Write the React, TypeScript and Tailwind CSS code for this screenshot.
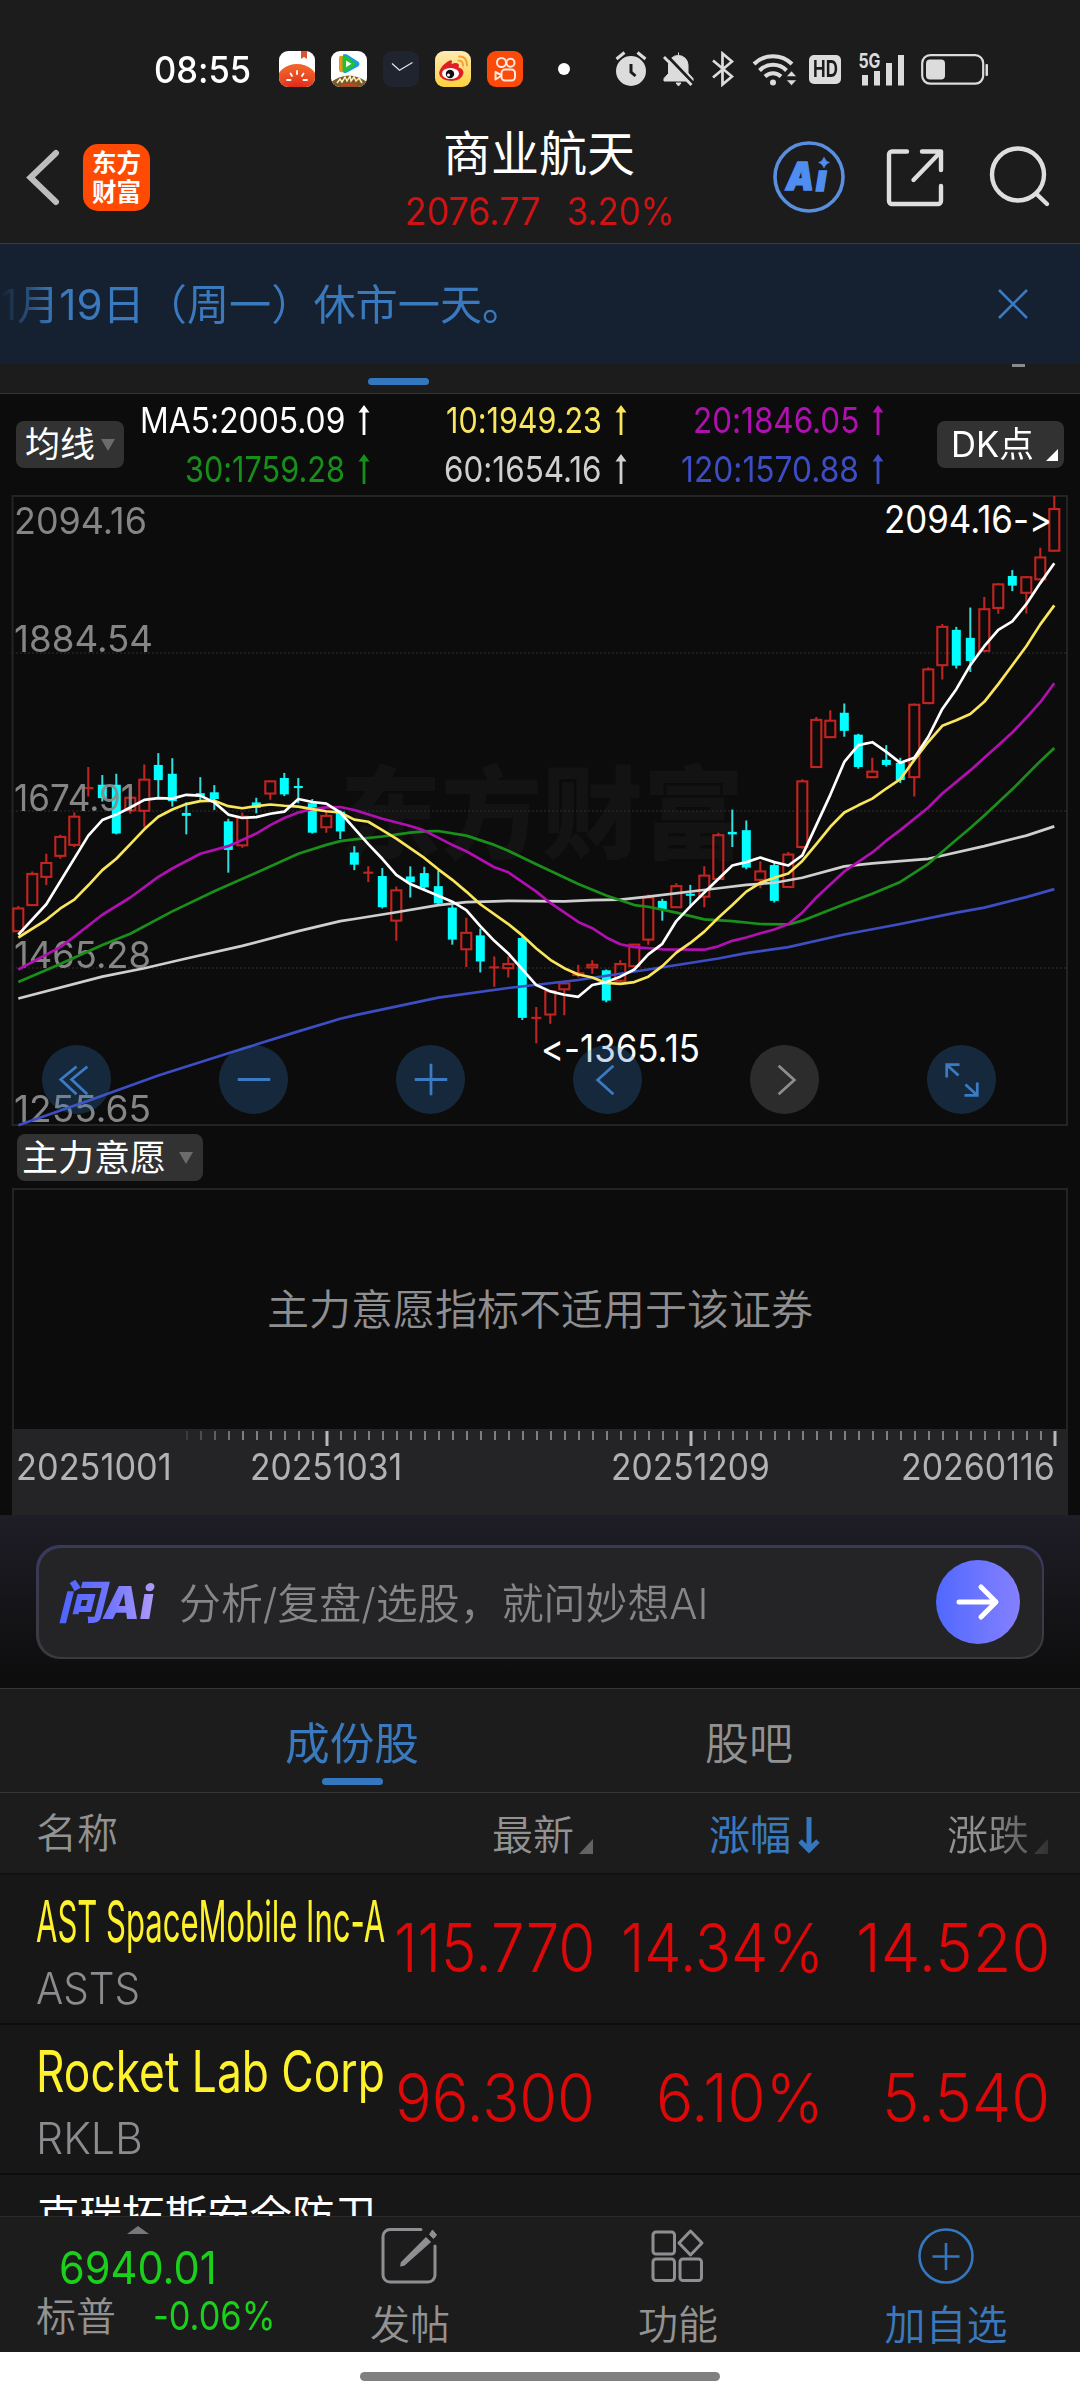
import React, { useLayoutEffect, useRef, useState } from "react";
import clsx from "clsx";

type Point = [number, number];
// [direction, body top, body bottom, high, low]
type Candle = ["u" | "d", number, number, number, number];

const candles: Candle[] = [
  ["u", 1018, 1072, 1012, 1074],
  ["u", 936, 1010, 930, 1012],
  ["u", 910, 943, 888, 962],
  ["u", 848, 893, 843, 900],
  ["u", 800, 867, 790, 872],
  ["u", 732, 732, 682, 752],
  ["d", 724, 756, 701, 764],
  ["d", 724, 840, 698, 842],
  ["u", 755, 785, 752, 793],
  ["u", 712, 786, 676, 825],
  ["d", 677, 713, 649, 755],
  ["d", 698, 763, 661, 776],
  ["d", 791, 798, 766, 842],
  ["d", 744, 752, 706, 760],
  ["d", 742, 758, 725, 784],
  ["d", 811, 879, 805, 933],
  ["u", 800, 868, 790, 874],
  ["d", 766, 779, 755, 792],
  ["u", 716, 745, 714, 760],
  ["d", 708, 747, 696, 751],
  ["d", 727, 732, 708, 768],
  ["d", 768, 838, 758, 840],
  ["u", 798, 825, 788, 838],
  ["d", 788, 835, 785, 853],
  ["d", 885, 914, 870, 927],
  ["u", 933, 933, 918, 955],
  ["d", 941, 1015, 922, 1018],
  ["u", 975, 1047, 966, 1095],
  ["d", 942, 956, 918, 992],
  ["d", 934, 968, 919, 972],
  ["d", 965, 1006, 928, 1010],
  ["d", 1016, 1092, 1010, 1104],
  ["u", 1076, 1115, 1040, 1157],
  ["d", 1082, 1144, 1066, 1170],
  ["u", 1158, 1158, 1132, 1204],
  ["u", 1150, 1160, 1132, 1182],
  ["d", 1088, 1278, 1082, 1283],
  ["u", 1278, 1278, 1252, 1338],
  ["u", 1215, 1270, 1212, 1292],
  ["u", 1196, 1210, 1190, 1272],
  ["u", 1172, 1176, 1152, 1182],
  ["u", 1152, 1158, 1141, 1173],
  ["d", 1165, 1237, 1163, 1241],
  ["u", 1150, 1190, 1141, 1194],
  ["u", 1104, 1155, 1102, 1158],
  ["u", 992, 1092, 985, 1104],
  ["d", 1000, 1020, 995, 1047],
  ["u", 965, 1015, 958, 1017],
  ["d", 983, 988, 962, 1012],
  ["u", 940, 990, 918, 1015],
  ["u", 844, 948, 838, 950],
  ["d", 836, 842, 783, 872],
  ["d", 832, 921, 809, 925],
  ["u", 930, 950, 906, 970],
  ["d", 915, 1000, 908, 1004],
  ["u", 890, 967, 884, 969],
  ["u", 716, 872, 711, 876],
  ["u", 570, 682, 563, 684],
  ["u", 572, 611, 547, 613],
  ["d", 553, 596, 531, 610],
  ["d", 605, 682, 603, 686],
  ["u", 693, 706, 660, 708],
  ["d", 665, 677, 630, 681],
  ["d", 672, 713, 660, 720],
  ["u", 534, 706, 531, 752],
  ["u", 450, 530, 445, 533],
  ["u", 349, 440, 342, 474],
  ["d", 356, 441, 349, 448],
  ["d", 375, 430, 303, 456],
  ["u", 307, 406, 278, 409],
  ["u", 248, 304, 245, 318],
  ["d", 228, 251, 214, 264],
  ["u", 231, 268, 228, 317],
  ["u", 184, 236, 161, 238],
  ["u", 69, 168, 38, 170],
];

const averages: { color: string; points: Point[] }[] = [
  {
    color: "#3d4dc4",
    points: [[0, 1533], [5, 1475], [10, 1415], [15, 1362], [20, 1310], [23, 1280], [24, 1272], [30, 1230], [35, 1207], [40, 1188], [45, 1163], [50, 1137], [52, 1124], [55, 1110], [59, 1080], [63, 1055], [67, 1028], [69, 1016], [72, 991], [74, 972]],
  },
  {
    color: "#cfcfcf",
    points: [[0, 1232], [6, 1180], [9, 1160], [12, 1137], [16, 1107], [20, 1072], [23, 1048], [24, 1043], [27, 1027], [30, 1010], [32, 1003], [34, 1001], [35, 1000], [39, 1001], [41, 998], [43, 997], [45, 990], [50, 970], [52, 962], [54, 957], [56, 945], [59, 918], [61, 911], [65, 900], [69, 870], [72, 845], [74, 823]],
  },
  {
    color: "#1a8f1a",
    points: [[0, 1193], [3, 1150], [6, 1105], [8, 1078], [11, 1025], [14, 977], [17, 933], [20, 888], [22, 867], [23, 858], [24, 854], [26, 847], [28, 838], [29, 835], [30, 834], [32, 845], [34, 867], [35, 881], [37, 913], [40, 960], [42, 987], [44, 1010], [45, 1014], [47, 1028], [49, 1044], [51, 1048], [53, 1055], [55, 1056], [56, 1047], [59, 1008], [61, 983], [63, 955], [65, 912], [67, 855], [68, 827], [69, 797], [71, 735], [73, 668], [74, 637]],
  },
  {
    color: "#b010b0",
    points: [[0, 1163], [3, 1110], [4, 1085], [6, 1033], [8, 992], [10, 943], [11, 923], [13, 888], [15, 870], [17, 840], [18, 820], [19, 803], [20, 790], [21, 782], [22, 778], [23, 777], [24, 784], [26, 805], [28, 822], [29, 833], [31, 867], [32, 882], [34, 920], [35, 932], [37, 978], [38, 1005], [40, 1050], [41, 1065], [42, 1087], [43, 1103], [44, 1110], [46, 1115], [49, 1116], [50, 1108], [51, 1095], [52, 1087], [53, 1077], [54, 1068], [55, 1055], [56, 1028], [57, 992], [59, 930], [61, 885], [62, 857], [63, 832], [65, 778], [66, 745], [68, 690], [70, 630], [71, 600], [72, 565], [73, 528], [74, 483]],
  },
  {
    color: "#f9e65c",
    points: [[0, 1087], [2, 1045], [3, 1018], [4, 997], [5, 963], [6, 927], [7, 900], [8, 865], [9, 830], [10, 800], [11, 783], [12, 770], [13, 763], [14, 762], [15, 775], [16, 780], [17, 775], [18, 771], [19, 774], [20, 776], [21, 782], [22, 787], [23, 790], [24, 807], [25, 812], [26, 832], [27, 852], [29, 898], [30, 925], [31, 950], [32, 978], [33, 1008], [35, 1055], [36, 1082], [37, 1113], [38, 1140], [39, 1160], [40, 1175], [41, 1182], [42, 1195], [43, 1197], [44, 1193], [45, 1180], [46, 1155], [47, 1123], [48, 1100], [49, 1073], [50, 1040], [51, 1010], [52, 978], [53, 957], [54, 945], [55, 935], [56, 905], [57, 865], [58, 824], [59, 790], [60, 773], [61, 757], [62, 733], [63, 711], [64, 665], [65, 622], [66, 584], [67, 571], [68, 556], [69, 527], [70, 485], [71, 440], [72, 395], [73, 343], [74, 298]],
  },
  {
    color: "#ffffff",
    points: [[0, 1080], [2, 1008], [5, 845], [6, 808], [7, 795], [8, 778], [9, 760], [10, 756], [11, 757], [12, 748], [13, 750], [14, 766], [15, 795], [16, 803], [17, 801], [18, 793], [19, 788], [20, 758], [21, 765], [22, 769], [23, 790], [24, 828], [25, 865], [26, 900], [27, 938], [28, 960], [30, 988], [31, 1002], [32, 1022], [33, 1060], [34, 1095], [35, 1125], [36, 1163], [37, 1200], [38, 1215], [39, 1223], [40, 1228], [41, 1200], [42, 1193], [43, 1180], [44, 1163], [45, 1127], [46, 1102], [47, 1048], [48, 1013], [49, 980], [50, 948], [51, 916], [52, 908], [53, 897], [54, 908], [55, 916], [56, 892], [57, 820], [58, 748], [59, 670], [60, 630], [61, 623], [62, 646], [63, 672], [64, 660], [65, 610], [66, 544], [67, 497], [68, 440], [69, 395], [70, 356], [71, 336], [72, 295], [73, 245], [74, 198]],
  },
];

const axisLabels = [
  { text: "2094.16", y: 533.5, w: 130 },
  { text: "1884.54", y: 652, w: 136 },
  { text: "1674.91", y: 811, w: 118 },
  { text: "1465.28", y: 968, w: 134 },
  { text: "1255.65", y: 1121.5, w: 134 },
];

const maColumns = [
  [
    { text: "MA5:2005.09", w: 205, color: "text-white" },
    { text: "30:1759.28", w: 160, color: "text-[#17901a]" },
  ],
  [
    { text: "10:1949.23", w: 156, color: "text-[#f9e65c]" },
    { text: "60:1654.16", w: 158, color: "text-[#cfcfcf]" },
  ],
  [
    { text: "20:1846.05", w: 166, color: "text-[#b010b0]" },
    { text: "120:1570.88", w: 178, color: "text-[#3d4dc4]" },
  ],
];

const stocks = [
  { name: "AST SpaceMobile Inc-A", code: "ASTS", codeW: 104, price: ["115.770", 201], pct: ["14.34%", 203], diff: ["14.520", 194] },
  { name: "Rocket Lab Corp", code: "RKLB", codeW: 107, price: ["96.300", 200], pct: ["6.10%", 168], diff: ["5.540", 168] },
] as const;

const xAt = (i: number) => 18 + i * 14;
const yAt = (v: number) => 480 + v / 2.376;

// squeezes a single line of text into a fixed width
const Fit = ({ w, className, children }: { w: number; className?: string; children: React.ReactNode }) => {
  const ref = useRef<HTMLSpanElement>(null);
  const [scale, setScale] = useState(1);

  useLayoutEffect(() => {
    if (ref.current) setScale(w / ref.current.offsetWidth);
  }, [w, children]);

  return (
    <span className={clsx("flex shrink-0 whitespace-nowrap", className)} style={{ width: w }}>
      <span ref={ref} className="inline-block shrink-0 origin-left" style={{ transform: `scaleX(${scale})` }}>
        {children}
      </span>
    </span>
  );
};

const AppIcons = () => (
  <div className="flex gap-4">
    <svg className="size-9 rounded-[9px]" viewBox="0 0 36 36">
      <defs>
        <radialGradient id="tomato" cx="0.5" cy="1" r="0.9">
          <stop offset="0" stopColor="#d81212" />
          <stop offset="1" stopColor="#f0622a" />
        </radialGradient>
      </defs>
      <rect width="36" height="36" fill="#fff" />
      <path d="M22 0h6v8l-3-2-3 2z" fill="#d8552f" />
      <ellipse cx="18" cy="29" rx="20" ry="16" fill="url(#tomato)" />
      <path d="M18 20v3M11.500 22.500l1.500 2.500M24.500 22.500l-1.500 2.500M8 29h3.500M28 29h-3.500" stroke="#fff" strokeWidth="1.800" strokeLinecap="round" />
    </svg>
    <svg className="size-9 rounded-[9px]" viewBox="0 0 36 36">
      <rect width="36" height="36" fill="#fff" />
      <path d="M8 7q0-3 4-2v16q-4 1-4-3z" fill="#f5901e" />
      <path d="M12 3.500q2-.8 4 0l11 7q3 2.500 0 5l-11 6q-4 1.500-4-1z" fill="#1a9be0" />
      <path d="M11.500 5.500q2-.8 4 0l7 5q3 2.500 0 5l-7 4.500q-4 1.500-4-1z" fill="#1fc32c" />
      <path d="M15 9.500l5.500 3.300-5.500 3.400z" fill="#fff" />
      <path d="M0 31q18-13 36 0v5H0z" fill="#7c5a28" />
      <path d="M6 32l3-4 2 3 3-5 2 4 3-5 1 5 3-4 2 4 3-3 3 5" stroke="#fbeec0" strokeWidth="1.500" fill="none" />
      <path d="M10 35q8-3 16 0" stroke="#d23c1c" strokeWidth="2" fill="none" />
    </svg>
    <svg className="size-9 rounded-[9px]" viewBox="0 0 36 36">
      <rect width="36" height="36" fill="#20242f" />
      <path d="M9 12.500l7.500 6.800L29.500 11.500" stroke="#e4e4ea" strokeWidth="1.200" fill="none" />
    </svg>
    <svg className="size-9 rounded-[9px]" viewBox="0 0 36 36">
      <defs>
        <linearGradient id="weibo" x1="0" y1="0" x2="0" y2="1">
          <stop offset="0" stopColor="#fdebb6" />
          <stop offset="1" stopColor="#ffd23c" />
        </linearGradient>
      </defs>
      <rect width="36" height="36" fill="url(#weibo)" />
      <path d="M4 22q1-6 8-11 4-3 5-1l-.5 3q5-2 7 0 1 1.500 0 3.500 5 1 5 5.500-1 7-12 8Q4.500 29 4 22z" fill="#e01e26" />
      <ellipse cx="15.500" cy="22.500" rx="8.500" ry="5.500" fill="#fff" />
      <circle cx="15" cy="23" r="4.200" fill="#111" />
      <circle cx="13.500" cy="24" r="1.500" fill="#fff" />
      <path d="M24 5.500q8-.5 8 9M23.500 9.500q4.500 0 4.500 5" stroke="#f5a32c" strokeWidth="2" fill="none" strokeLinecap="round" />
    </svg>
    <svg className="size-9 rounded-[9px]" viewBox="0 0 36 36" fill="none" stroke="#ffe9dc" strokeWidth="2">
      <rect width="36" height="36" fill="#fc4a0b" stroke="none" />
      <circle cx="14.500" cy="11.500" r="4.500" />
      <circle cx="23.500" cy="11.800" r="4" />
      <rect x="14.500" y="18.500" width="13.500" height="11" rx="3.500" />
      <path d="M14 24l-5.500-3v7.500L14 25z" strokeLinejoin="round" />
    </svg>
  </div>
);

const StatusIcons = () => (
  <div className="flex items-center text-[#dcdcdc]">
    <svg className="ml-[45px] h-9 w-[32px]" viewBox="0 0 32 36">
      <circle cx="16" cy="20" r="15" fill="currentColor" />
      <path d="M1.500 8l8-6.500M30.500 8l-8-6.500" stroke="currentColor" strokeWidth="3" />
      <path d="M16 13v8l4.500 4" stroke="#1c1c1c" strokeWidth="3" fill="none" />
    </svg>
    <svg className="ml-[16px] h-9 w-[31px]" viewBox="0 0 31 36">
      <path d="M15.500 1.500v3a9.500 9.500 0 0 1 9.500 9.500v8l5 5.500v2.500H1v-2.500l4.500-5V14a9.500 9.500 0 0 1 10-9.500M13 32h5l-2.500 3z" fill="currentColor" stroke="currentColor" />
      <path d="M3 3.500l28 29.500" stroke="#1c1c1c" strokeWidth="3" />
      <path d="M1 6l27.500 28" stroke="currentColor" strokeWidth="2.800" />
    </svg>
    <svg className="ml-[18px] h-9 w-[22px]" viewBox="0 0 22 36" fill="none" stroke="currentColor" strokeWidth="2.700">
      <path d="M1 9.500l19 16-9.500 8V2.500l9.500 8-19 16" />
    </svg>
    <svg className="ml-[18px] h-9 w-[46px]" viewBox="0 0 46 36" fill="none" stroke="currentColor" strokeWidth="4">
      <path d="M2 13a27 27 0 0 1 38 0M7.500 19.500a19 19 0 0 1 27 0M13 25.500a11.500 11.500 0 0 1 16 0" />
      <circle cx="21" cy="31.500" r="3" fill="currentColor" stroke="none" />
      <path d="M34.500 25.500l5-5.500 5 5.500zM34.500 29l5 5.500 5-5.500z" fill="currentColor" stroke="#1c1c1c" strokeWidth="0.500" />
    </svg>
    <span className="ml-[11px] flex h-[29px] w-[32px] items-center justify-center rounded-[5px] bg-[#dcdcdc] text-[23px] leading-none font-bold text-[#1c1c1c]">
      <Fit w={25}>HD</Fit>
    </span>
    <svg className="ml-[17px] h-9 w-[48px] overflow-visible" viewBox="0 0 48 36" fill="currentColor">
      <path d="M4 24h6v10.500H4zM16 20h6v14.500h-6zM28 12h6v22.500h-6zM40 4h6v30.500h-6z" />
      <rect width="24" height="18" fill="#1c1c1c" />
      <text x="0.500" y="16.500" fontSize="20" fontWeight="700" textLength="22" lengthAdjust="spacingAndGlyphs">5G</text>
    </svg>
    <svg className="ml-[15px] h-[31px] w-[68px]" viewBox="0 0 68 31" fill="none">
      <rect x="1.200" y="1.200" width="61" height="28.500" rx="8" stroke="currentColor" strokeWidth="2.200" />
      <rect x="5" y="5.500" width="19" height="20" rx="4" fill="currentColor" />
      <rect x="64.500" y="10" width="2.500" height="12" rx="1" fill="currentColor" />
    </svg>
  </div>
);

const Header = () => (
  <header className="bg-[#1c1c1c]">
    <div className="flex h-[122px] items-center pt-[16px]">
      <Fit w={97} className="ml-[154px] text-[37px] leading-none font-medium text-white">08:55</Fit>
      <div className="ml-[28px]">
        <AppIcons />
      </div>
      <span className="ml-[35px] size-3 rounded-full bg-white" />
      <StatusIcons />
    </div>
    <div className="flex h-[122px] border-b border-[#3a3a3a]">
      <svg className="mt-[26px] ml-[26px] h-[58px] w-[36px] shrink-0" viewBox="0 0 36 58" fill="none" stroke="#bdbdbd" strokeWidth="6" strokeLinecap="round">
        <path d="M30 5L4.500 29.500 30 54" />
      </svg>
      <div className="mt-[22px] ml-[21px] flex size-[67px] shrink-0 flex-col items-center justify-center rounded-[15px] bg-[#ff4a04] text-[24.500px] leading-[29px] font-bold text-white">
        <span>东方</span>
        <span>财富</span>
      </div>
      <div className="ml-[253px] flex w-[272px] shrink-0 flex-col items-center">
        <h1 className="mt-[5px] text-[48px] leading-[54px] text-white">商业航天</h1>
        <div className="mt-[13px] ml-[2px] flex gap-[26px] text-[38px] leading-[34px] text-[#cd1313]">
          <Fit w={136}>2076.77</Fit>
          <Fit w={108}>3.20%</Fit>
        </div>
      </div>
      <svg className="mt-[18px] ml-[97px] size-[74px] shrink-0" viewBox="0 0 74 74">
        <circle cx="37" cy="37" r="34" stroke="#5a8ede" strokeWidth="3.600" fill="none" />
        <g fill="#4f8df0" stroke="#4f8df0">
          <text x="14" y="49.500" fontSize="39" fontWeight="900" fontStyle="italic" strokeWidth="1.500" textLength="28" lengthAdjust="spacingAndGlyphs">A</text>
          <text x="44" y="51" fontSize="36" fontWeight="900" fontStyle="italic" strokeWidth="1.500">ı</text>
          <path d="M52 17q1.500 4.500 5.500 5.500-4 1-5.500 5.500-1.500-4.500-5.500-5.500 4-1 5.500-5.500z" strokeWidth="0.500" />
        </g>
      </svg>
      <svg className="mt-[25px] ml-[39px] size-[62px] shrink-0" viewBox="0 0 62 62" fill="none" stroke="#dedede" strokeWidth="4.400" strokeLinecap="round" strokeLinejoin="round">
        <path d="M22 4.500H7a3 3 0 0 0-3 3V54a3 3 0 0 0 3 3h46a3 3 0 0 0 3-3V39M37 4.500h19V23M56 4.500L28.500 33" />
      </svg>
      <svg className="mt-[24px] ml-[40px] size-[64px] shrink-0" viewBox="0 0 64 64" fill="none" stroke="#dedede" strokeWidth="4.400" strokeLinecap="round">
        <circle cx="31" cy="28.500" r="26" />
        <path d="M49 47.500l11 10.500" />
      </svg>
    </div>
  </header>
);

const Arrow = () => (
  <svg className="ml-[12px] h-[30px] w-[14px]" viewBox="0 0 14 30" fill="currentColor">
    <path d="M7 0l5.500 7.500H8.400V30H5.600V7.500H1.500z" />
  </svg>
);

const MaBar = () => (
  <div className="flex h-[101px] shrink-0 bg-[#0c0c0c]">
    <button className="mt-[27px] ml-4 flex h-[47px] w-[108px] shrink-0 items-center rounded-lg bg-[#323232] pl-[9px] text-[35px] leading-none text-white">
      均线
      <svg className="ml-[6px] h-[12px] w-[14px]" viewBox="0 0 14 12" fill="#6c6c6c">
        <path d="M0 0h14L7 12z" />
      </svg>
    </button>
    <div className="ml-[16px] grid w-[745px] shrink-0 grid-cols-[231px_257px_257px] text-[36px]">
      {maColumns.map((column) => (
        <div key={column[0].text} className="flex flex-col pt-[1px]">
          {column.map((item) => (
            <div key={item.text} className={clsx("flex h-[49px] items-center justify-end leading-none", item.color)}>
              <Fit w={item.w}>{item.text}</Fit>
              <Arrow />
            </div>
          ))}
        </div>
      ))}
    </div>
    <button className="mt-[27px] ml-[52px] flex h-[47px] w-[127px] shrink-0 items-center rounded-lg bg-[#323232] pl-[14px] text-[35px] leading-none text-white">
      <Fit w={83}>DK点</Fit>
      <svg className="mt-[21px] ml-[12px] size-[12px]" viewBox="0 0 12 12" fill="#fff">
        <path d="M12 0v12H0z" />
      </svg>
    </button>
  </div>
);

const KLineChart = () => (
  <svg className="block h-[635px] w-full" viewBox="0 495 1080 635">
    <text x="340" y="851" fontSize="101" fontWeight="900" fill="#131313">东方财富</text>
    <rect x="12.500" y="496" width="1054.500" height="629" fill="none" stroke="#242424" strokeWidth="2" />
    {[653, 811, 968].map((y) => (
      <line key={y} x1="12" x2="1067" y1={y} y2={y} stroke="#2e2e2e" strokeWidth="1" strokeDasharray="2 2" />
    ))}
    {candles.map(([dir, top, bottom, high, low], i) => {
      const x = xAt(i) + 0.3;
      const t = yAt(top);
      const h = yAt(bottom) - t;
      if (dir === "d") {
        return (
          <g key={i}>
            <line x1={x} x2={x} y1={yAt(high)} y2={yAt(low)} stroke="#35dede" strokeWidth="2" />
            <rect x={x - 4.5} y={t} width="9" height={Math.max(h, 2)} fill="#00ffff" />
          </g>
        );
      }
      return (
        <g key={i} stroke="#c22420" strokeWidth="2.100" fill="none">
          <path d={`M${x} ${yAt(high)}V${t}M${x} ${t + h}V${yAt(low)}`} />
          {h > 0 ? <rect x={x - 5} y={t} width="10" height={h} /> : <path d={`M${x - 5} ${t}h10`} />}
        </g>
      );
    })}
    <g fontSize="37" fill="#8c8c8c" opacity="0.950">
      {axisLabels.map((label) => (
        <text key={label.text} x="14" y={label.y} textLength={label.w + 3} lengthAdjust="spacingAndGlyphs">{label.text}</text>
      ))}
    </g>
    {averages.map((line) => (
      <polyline key={line.color} points={line.points.map(([i, v]) => `${xAt(i) + 0.3},${yAt(v)}`).join(" ")} fill="none" stroke={line.color} strokeWidth="2.700" strokeLinejoin="round" />
    ))}
    <g fontSize="38" fill="#fff">
      <text x="884" y="532.500" textLength="168" lengthAdjust="spacingAndGlyphs">{"2094.16->"}</text>
      <text x="541" y="1062" textLength="159" lengthAdjust="spacingAndGlyphs">{"<-1365.15"}</text>
    </g>
  </svg>
);

const chartButtons = [
  "M35 24L19 37l16 15M46 24L30 37l16 15",
  "M19 35h33",
  "M19 35h33M35.500 19v32",
  "M41 21L25 35.500 41 50",
  "M29 21l16 14.500L29 50",
  "M20 33V20h13M20 20l12 11M51 38v13H38M51 51L39 40",
];

const ChartControls = () => (
  <div className="absolute top-[550px] left-[42px] flex gap-[108px]">
    {chartButtons.map((d, i) => (
      <button key={d} className={clsx("size-[69px] rounded-full", i === 4 ? "bg-white/13 text-[#8e8e8e]" : "bg-[#3577bf]/27 text-[#3a7bc4]")}>
        <svg className="size-[69px]" viewBox="0 0 70 70" fill="none" stroke="currentColor" strokeWidth="2.800">
          <path d={d} transform={i === 0 ? "translate(0 -2)" : undefined} />
        </svg>
      </button>
    ))}
  </div>
);

const minorTicks = Array.from({ length: 63 }, (_, i) => 187 + i * 14);

const Indicator = () => (
  <div className="bg-[#0c0c0c] px-[12px]">
    <div className="h-[58px] pt-[4px]">
      <button className="ml-[5px] flex h-[47px] w-[186px] items-center rounded-lg bg-[#323232] pl-[5px] text-[36px] leading-none text-white">
        主力意愿
        <svg className="ml-[13px] h-[12px] w-[14px]" viewBox="0 0 14 12" fill="#6c6c6c">
          <path d="M0 0h14L7 12z" />
        </svg>
      </button>
    </div>
    <div className="flex h-[241px] w-[1056px] items-center justify-center border-2 border-b-0 border-[#242424] text-[42px] font-[350] text-[#8f8f92]">
      <Fit w={546}>主力意愿指标不适用于该证券</Fit>
    </div>
    <div className="h-[86px] w-[1056px] bg-[#242427]">
      <svg className="block h-[17px] w-full" viewBox="12 1429 1056 17">
        {minorTicks.map((x, i) => (
          <line key={x} x1={x} x2={x} y1="1431" y2="1440" stroke="#8a8a8a" strokeWidth="1.800" opacity={i < 4 ? 0.25 + i * 0.2 : 1} />
        ))}
        {[327, 691, 1055].map((x) => (
          <line key={x} x1={x} x2={x} y1="1431" y2="1446" stroke="#b8b8b8" strokeWidth="3" />
        ))}
      </svg>
      <div className="flex h-[40px] items-center text-[37px] leading-none text-[#b2b2b2]">
        <Fit w={156} className="ml-[4px]">20251001</Fit>
        <Fit w={152} className="ml-[78px]">20251031</Fit>
        <Fit w={159} className="ml-[209px]">20251209</Fit>
        <Fit w={154} className="ml-[131px]">20260116</Fit>
      </div>
    </div>
  </div>
);

const AskAi = () => (
  <div className="flex h-[173px] bg-linear-to-b from-[#1f1e27] to-[#0c0c0c] px-9 pt-[30px]">
    <div className="h-[114px] w-[1008px] rounded-[24px] bg-linear-to-b from-[#39395f] to-[#3d3a3a] p-[2.5px]">
      <div className="flex h-full items-center rounded-[22px] bg-[#242427]">
        <Fit w={100} className="ml-[19px] text-[46px] leading-[56px] font-black italic">
          <span className="bg-linear-to-r from-[#4d63ff] via-[#6f74ff] to-[#b49cf8] bg-clip-text pr-[4px] text-transparent">问Ai</span>
        </Fit>
        <Fit w={530} className="mt-[2px] ml-[21px] text-[42px] font-[350] text-[#868686]">分析/复盘/选股，就问妙想AI</Fit>
        <button className="ml-[227px] flex size-[84px] shrink-0 items-center justify-center rounded-full bg-linear-to-r from-[#5068ff] to-[#8580ff]">
          <svg className="size-[44px]" viewBox="0 0 44 44" fill="none" stroke="#fff" strokeWidth="5" strokeLinecap="round" strokeLinejoin="round">
            <path d="M3 22h36M25 7l15 15-15 15" />
          </svg>
        </button>
      </div>
    </div>
  </div>
);

const Corner = ({ className }: { className: string }) => (
  <svg className={clsx("h-[15px] w-[14px]", className)} viewBox="0 0 14 15" fill="currentColor">
    <path d="M14 0v15H0z" />
  </svg>
);

const Constituents = () => (
  <section className="flex h-[528px] flex-col overflow-hidden bg-[#171717]">
    <div className="flex h-[105px] shrink-0 items-start border-y border-[#363636] bg-[#1c1c1c] text-[44px] leading-[48px] font-[350]">
      <div className="mt-[31px] ml-[285px] flex w-[134px] flex-col items-center text-[#3a79bd]">
        <Fit w={134} className="font-normal">成份股</Fit>
        <span className="mt-[10px] h-[7px] w-[61px] rounded-full bg-[#3577bf]" />
      </div>
      <span className="mt-[31px] ml-[286px] text-[#929292]">股吧</span>
    </div>
    <div className="flex h-[82px] shrink-0 items-center border-b-2 border-[#121212] bg-[#1c1c1c] text-[41px] leading-none font-[350] text-[#929292]">
      <span className="ml-[36px] pt-[1px]">名称</span>
      <span className="ml-[374px] pt-[5px]">最新</span>
      <Corner className="mt-[26px] ml-[5px] text-[#636363]" />
      <span className="ml-[116px] pt-[5px] font-normal text-[#3a79bd]">涨幅</span>
      <svg className="mt-[4px] ml-[7px] h-[37px] w-[22px]" viewBox="0 0 22 37" fill="none" stroke="#3577bf" strokeWidth="5">
        <path d="M11 0v32M2 24l9 9 9-9" />
      </svg>
      <div className="ml-[127px] flex items-center mask-r-from-40% mask-r-to-130%">
        <span className="pt-[5px]">涨跌</span>
        <Corner className="mt-[26px] ml-[5px] text-[#636363]" />
      </div>
    </div>
    {stocks.map((stock) => (
      <div key={stock.code} className="flex h-[150px] shrink-0 border-b-2 border-[#0c0c0c] pl-[36px]">
        <div className="flex w-[350px] shrink-0 flex-col">
          <Fit w={349} className="mt-[19px] text-[57px] leading-[56px] text-[#fdf22d]">{stock.name}</Fit>
          <Fit w={stock.codeW} className="mt-[16px] text-[44px] leading-[44px] font-[350] text-[#8c8c90]">{stock.code}</Fit>
        </div>
        <div className="mt-[40px] grid h-[66px] grid-cols-[209px_229px_226px] justify-items-end text-[67px] leading-[66px] font-[350] text-[#dd0808]">
          <Fit w={stock.price[1]}>{stock.price[0]}</Fit>
          <Fit w={stock.pct[1]}>{stock.pct[0]}</Fit>
          <Fit w={stock.diff[1]}>{stock.diff[0]}</Fit>
        </div>
      </div>
    ))}
    <div className="mt-[15px] ml-[37px] shrink-0 text-[42.500px] leading-[52px] text-white">克瑞拓斯安全防卫</div>
  </section>
);

const BottomBar = () => (
  <footer className="flex h-[136px] border-t border-[#2c2c2c] bg-[#1c1c1c] text-[40px] leading-[46px] font-[350] text-[#929292]">
    <div className="flex w-[276px] shrink-0 flex-col">
      <svg className="mt-[9px] ml-[127px] h-[8px] w-[22px]" viewBox="0 0 22 8" fill="#77777b">
        <path d="M11 0l11 8H0z" />
      </svg>
      <Fit w={158} className="mt-[17px] ml-[59px] text-[45px] leading-[34px] font-normal text-[#1bd01b]">6940.01</Fit>
      <div className="mt-[8px] ml-[36px] flex">
        <span className="pt-[1px]">标普</span>
        <Fit w={122} className="ml-[37px] text-[40px] font-normal text-[#1bd01b]">-0.06%</Fit>
      </div>
    </div>
    <div className="flex w-[268px] flex-col items-center">
      <svg className="mt-[10px] size-[58px]" viewBox="0 0 58 58" fill="none" stroke="#8f8f93" strokeWidth="3">
        <path d="M40 2.500H9a7 7 0 0 0-7 7V48a7 7 0 0 0 7 7h38a7 7 0 0 0 7-7V19" strokeLinecap="round" />
        <path d="M45 11l4 4-26 23-3 .5.500-3z" fill="#8f8f93" strokeWidth="1.500" />
        <path d="M48.500 7.500l4 4 3-3.500-4-5z" fill="#8f8f93" strokeWidth="1" />
      </svg>
      <span className="mt-[17px]">发帖</span>
    </div>
    <div className="flex w-[268px] flex-col items-center">
      <svg className="mt-[10px] size-[58px]" viewBox="0 0 58 58" fill="none" stroke="#8f8f93" strokeWidth="3">
        <rect x="4" y="5" width="21.500" height="22" rx="3" />
        <rect x="4" y="32" width="21.500" height="21.500" rx="3" />
        <rect x="31" y="32" width="21.500" height="21.500" rx="3" />
        <path d="M41.500 4l11.500 12-11.500 12L30 16z" strokeLinejoin="round" />
      </svg>
      <span className="mt-[17px]">功能</span>
    </div>
    <div className="flex w-[268px] flex-col items-center text-[#3a79bd]">
      <svg className="mt-[10px] size-[58px]" viewBox="0 0 58 58" fill="none" stroke="#3577bf" strokeWidth="2.600">
        <circle cx="29" cy="29" r="26.500" />
        <path d="M15.500 29.500h27M29 16v27" />
      </svg>
      <span className="mt-[17px] text-[41px]">加自选</span>
    </div>
  </footer>
);

const App = () => {
  return (
    <main className="flex h-[2400px] w-[1080px] flex-col overflow-hidden bg-[#0c0c0c] font-['Inter','Noto_Sans_CJK_SC',sans-serif] [font-feature-settings:'calt'_0]">
      <Header />
      <div className="flex h-[120px] shrink-0 items-center bg-[#152130] text-[#3a79bd]">
        <div className="w-[900px] overflow-hidden mask-l-from-94% mask-l-to-100% pt-[2px]">
          <Fit w={524} className="text-[42px] leading-[60px]">1月19日（周一）休市一天。</Fit>
        </div>
        <svg className="ml-[97px] size-[32px]" viewBox="0 0 32 32" stroke="#3a7bc4" strokeWidth="2.600">
          <path d="M2 2l28 28M30 2L2 30" />
        </svg>
      </div>
      <div className="flex h-[30px] shrink-0 items-start border-b border-[#363636] bg-[#1c1c1c]">
        <span className="mt-[14px] ml-[368px] h-[7px] w-[61px] rounded-full bg-[#3577bf]" />
        <span className="ml-[583px] h-[3px] w-[13px] bg-[#8a8a8a]" />
      </div>
      <MaBar />
      <div className="relative shrink-0">
        <KLineChart />
        <ChartControls />
      </div>
      <Indicator />
      <AskAi />
      <Constituents />
      <BottomBar />
      <div className="flex h-[48px] shrink-0 items-center justify-center bg-white">
        <span className="h-[9px] w-[360px] rounded-full bg-[#808080]" />
      </div>
    </main>
  );
};

export default App;
